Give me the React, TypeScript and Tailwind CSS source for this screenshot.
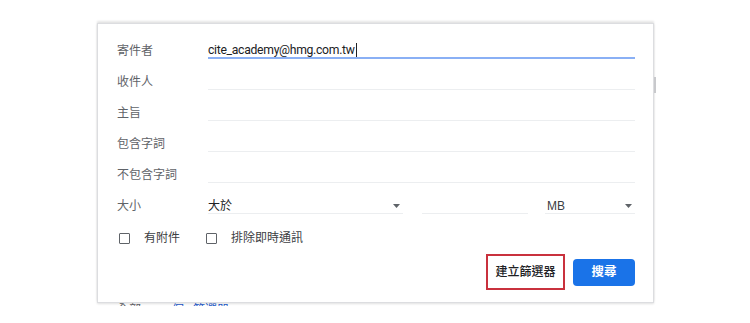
import React from "react";

const font = { fontFamily: "Roboto, 'Noto Sans CJK TC', 'Noto Sans', sans-serif" };

function Arrow() {
  return (
    <svg width="7" height="4" viewBox="0 0 7 4" className="shrink-0">
      <path d="M0 0 L7 0 L3.5 4 Z" fill="#5f6368" />
    </svg>
  );
}

function Row({ label, children, focused }: { label: string; children?: React.ReactNode; focused?: boolean }) {
  return (
    <div className="flex h-[31px] items-end">
      <div className="w-[91px] h-[16px] leading-[16px] text-[12px] text-[#5f6368]">{label}</div>
      <div
        className={
          "flex-1 h-[16px] leading-[16px] flex items-center " +
          (focused ? "border-b-2 border-[#8ab0f5]" : "border-b border-[#eceef0]")
        }
      >
        {children}
      </div>
    </div>
  );
}

function Check({ label }: { label: string }) {
  return (
    <div className="flex items-center">
      <div className="w-[11px] h-[11px] border-[1.5px] border-[#5f6368] rounded-[1px] ml-[2px]" />
      <span className="ml-[14px] text-[12px] text-[#3c4043]">{label}</span>
    </div>
  );
}

export default function App() {
  return (
    <div className="w-[750px] h-[323px] bg-white overflow-hidden" style={font}>
      <div className="pt-[23px] pl-[97px]">
        <div className="relative w-[557px] h-[280px] bg-white border border-[#dcdde0] shadow-[0_-2px_2px_rgba(0,0,0,0.10),0_1px_2px_rgba(0,0,0,0.12)] pt-[4px] pl-[19px] pr-[18px]">
          <div className="absolute right-[-3px] top-[53px] w-[2px] h-[16px] bg-[#c8c9cc]" />
          <Row label="寄件者" focused>
            <span className="text-[12.2px] tracking-[-0.3px] text-[#202124] leading-[16px]">cite_academy@hmg.com.tw</span>
            <span className="w-[1px] h-[14px] bg-[#202124] ml-[1px]" />
          </Row>
          <Row label="收件人" />
          <Row label="主旨" />
          <Row label="包含字詞" />
          <Row label="不包含字詞" />
          <div className="flex h-[31px] items-end">
            <div className="w-[91px] h-[16px] leading-[16px] text-[12px] text-[#5f6368]">大小</div>
            <div className="w-[195px] h-[16px] border-b border-[#eceef0] flex items-center justify-between pr-[3px]">
              <span className="text-[12px] text-[#202124]">大於</span>
              <Arrow />
            </div>
            <div className="w-[106px] h-[16px] border-b border-[#eceef0] ml-[19px]" />
            <div className="flex-1 h-[16px] border-b border-[#eceef0] ml-[17px] flex items-center justify-between pl-[2px] pr-[3px]">
              <span className="text-[12px] text-[#3c4043]" style={{ fontFamily: "'Liberation Sans', Arial, sans-serif" }}>MB</span>
              <Arrow />
            </div>
          </div>
          <div className="flex items-center h-[16px] mt-[16px] gap-[24px]">
            <Check label="有附件" />
            <Check label="排除即時通訊" />
          </div>
          <div className="flex justify-end items-center mt-[8px] gap-[8px]">
            <div className="w-[79px] h-[36px] border-2 border-[#c9313d] flex items-center justify-center">
              <span className="text-[12px] text-[#202124] font-medium">建立篩選器</span>
            </div>
            <div className="w-[62px] h-[27px] bg-[#1a73e8] rounded-[4px] flex items-center justify-center">
              <span className="text-[12.5px] text-white font-bold">搜尋</span>
            </div>
          </div>
        </div>
        <div className="h-[3px] overflow-hidden flex pl-[20px] gap-[19px]">
          <span className="text-[12px] leading-[12px] text-[#5f6368] pt-[1px]">全部</span>
          <span className="text-[12px] leading-[12px] text-[#1a57c9] pt-[1px]">一個 · 篩選器</span>
        </div>
      </div>
    </div>
  );
}
